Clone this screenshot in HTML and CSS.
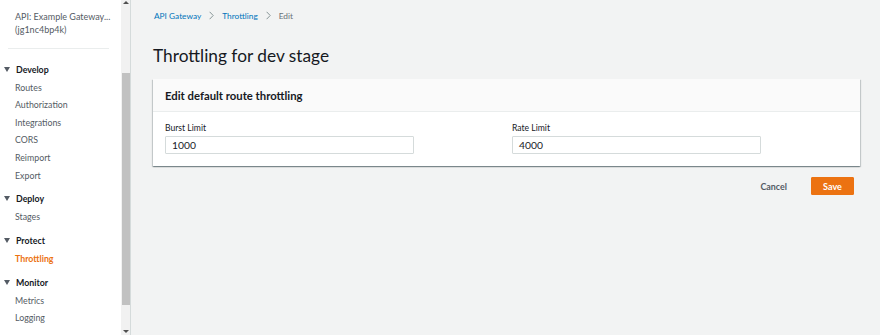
FILE: index.html
```html
<!DOCTYPE html>
<html>
<head>
<meta charset="utf-8">
<link rel="stylesheet" href="styles.css">
</head>
<body>
<div class="app">
  <aside class="sidebar">
    <nav class="nav">
      <div class="api-name">API: Example Gateway...<br>(jg1nc4bp4k)</div>
      <div class="divider"></div>
      <div class="group">
        <div class="group-title"><span class="tri"></span>Develop</div>
        <a class="item">Routes</a>
        <a class="item">Authorization</a>
        <a class="item">Integrations</a>
        <a class="item">CORS</a>
        <a class="item">Reimport</a>
        <a class="item">Export</a>
      </div>
      <div class="group">
        <div class="group-title"><span class="tri"></span>Deploy</div>
        <a class="item">Stages</a>
      </div>
      <div class="group">
        <div class="group-title"><span class="tri"></span>Protect</div>
        <a class="item active">Throttling</a>
      </div>
      <div class="group">
        <div class="group-title"><span class="tri"></span>Monitor</div>
        <a class="item">Metrics</a>
        <a class="item">Logging</a>
      </div>
    </nav>
    <div class="scrollbar">
      <span class="arrow up"></span>
      <div class="thumb"></div>
      <span class="arrow down"></span>
    </div>
  </aside>
  <main class="main">
    <div class="breadcrumb">
      <a class="crumb">API Gateway</a>
      <svg class="chev" width="5" height="9" viewBox="0 0 5 9"><path d="M0.6 0.8l3.6 3.7-3.6 3.7" fill="none" stroke="#879596" stroke-width="1"/></svg>
      <a class="crumb">Throttling</a>
      <svg class="chev" width="5" height="9" viewBox="0 0 5 9"><path d="M0.6 0.8l3.6 3.7-3.6 3.7" fill="none" stroke="#879596" stroke-width="1"/></svg>
      <span class="crumb-current">Edit</span>
    </div>
    <h1 class="title">Throttling for dev stage</h1>
    <section class="card">
      <div class="card-header">Edit default route throttling</div>
      <div class="card-body">
        <div class="field">
          <label class="label">Burst Limit</label>
          <div class="input">1000</div>
        </div>
        <div class="field">
          <label class="label">Rate Limit</label>
          <div class="input">4000</div>
        </div>
      </div>
    </section>
    <div class="actions">
      <button class="btn-link">Cancel</button>
      <button class="btn-primary">Save</button>
    </div>
  </main>
</div>
</body>
</html>
```
FILE: styles.css
```css
* { box-sizing: border-box; }
html, body { margin: 0; padding: 0; }
body {
  font-family: Lato, "Open Sans", "Liberation Sans", sans-serif;
  background: #f2f3f3;
  color: #16191f;
  width: 880px;
  height: 335px;
  overflow: hidden;
}
.app { display: flex; height: 335px; }
.sidebar {
  display: flex;
  width: 131px;
  background: #fff;
  border-right: 1px solid #d5dbdb;
  flex-shrink: 0;
}
.nav {
  width: 121px;
  padding: 10px 0 0 0;
  font-size: 8.8px;
  color: #545b64;
}
.api-name {
  padding-left: 15px;
  line-height: 13px;
  font-size: 9px;
}
.divider {
  height: 1px;
  background: #eaeded;
  margin: 12px 12px 11px 8px;
}
.group { margin-bottom: 5.5px; }
.group-title {
  display: flex;
  align-items: center;
  font-weight: 700;
  color: #16191f;
  height: 18.6px;
  padding-left: 4px;
}
.tri {
  width: 0; height: 0;
  border-left: 3px solid transparent;
  border-right: 3px solid transparent;
  border-top: 5px solid #545b64;
  margin-right: 6px;
}
.item {
  display: block;
  padding-left: 15px;
  height: 17.6px;
  line-height: 17.6px;
}
.item.active { color: #ec7211; font-weight: 700; }
.scrollbar {
  width: 9px;
  background: #f1f1f1;
  display: flex;
  flex-direction: column;
  align-items: center;
}
.arrow { width: 0; height: 0; }
.arrow.up {
  margin-top: 1px;
  border-left: 3px solid transparent;
  border-right: 3px solid transparent;
  border-bottom: 3px solid #505050;
}
.arrow.down {
  margin-top: auto;
  margin-bottom: 2px;
  border-left: 3px solid transparent;
  border-right: 3px solid transparent;
  border-top: 3px solid #505050;
}
.thumb {
  width: 8px;
  height: 232px;
  margin-top: 69px;
  background: #c1c1c1;
}
.main {
  flex: 1;
  padding: 8px 20px 0 22px;
}
.breadcrumb {
  display: flex;
  align-items: center;
  gap: 8px;
  font-size: 8.3px;
  height: 15px;
  padding-left: 1px;
}
.crumb { color: #0073bb; }
.crumb-current { color: #687078; }
.title {
  font-size: 17.3px;
  font-weight: 400;
  margin: 21px 0 0 0;
  line-height: 24px;
}
.card {
  margin-top: 11px;
  background: #fff;
  box-shadow: 0 1px 1px 0 rgba(0,28,36,0.3), 1px 1px 1px 0 rgba(0,28,36,0.15), -1px 1px 1px 0 rgba(0,28,36,0.15);
  width: 707px;
}
.card-header {
  background: #fafafa;
  border-bottom: 1px solid #eaeded;
  height: 33px;
  padding: 0 12px;
  display: flex;
  align-items: center;
  font-weight: 700;
  font-size: 11.3px;
}
.card-body {
  display: flex;
  gap: 98px;
  padding: 9px 12px 12px 12px;
}
.field { display: flex; flex-direction: column; width: 249px; }
.label {
  font-size: 8.6px;
  color: #16191f;
  line-height: 14px;
  margin-bottom: 1px;
}
.input {
  height: 18px;
  border: 1px solid #d5dbdb;
  border-radius: 1px;
  font-size: 10.3px;
  line-height: 16px;
  padding-left: 6px;
}
.actions {
  display: flex;
  justify-content: flex-end;
  align-items: center;
  gap: 24px;
  width: 701px;
  margin-top: 11px;
}
.btn-link {
  background: none;
  border: none;
  font-family: inherit;
  font-weight: 700;
  font-size: 8.9px;
  color: #545b64;
  padding: 0;
}
.btn-primary {
  font-family: inherit;
  background: #ec7211;
  border: 1px solid #ec7211;
  color: #fff;
  font-weight: 700;
  font-size: 9px;
  width: 43px;
  height: 18px;
  padding: 0;
  border-radius: 1px;
}
```
